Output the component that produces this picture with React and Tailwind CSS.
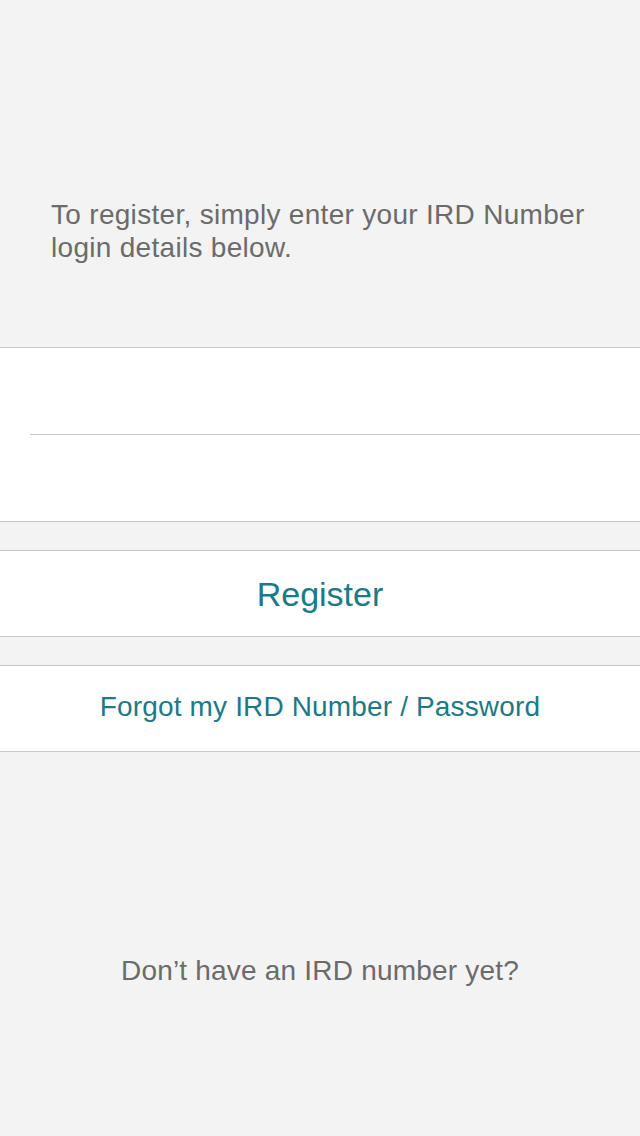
export default function App() {
  return (
    <div className="min-h-[1136px] w-full bg-[#f3f3f3] font-['Liberation_Sans',Arial,sans-serif]">
      <div className="pt-[198px] pb-[83px] pl-[51px] pr-[40px]">
        <p className="text-[28px] leading-[33px] tracking-[0.3px] text-[#6b6b6b]">
          To register, simply enter your IRD Number login details below.
        </p>
      </div>

      <div className="bg-white border-y border-[#c8c7cc]">
        <div className="h-[87px] border-b border-[#c8c7cc] ml-[30px]" />
        <div className="h-[86px]" />
      </div>

      <div className="h-[28px]" />
      <button className="w-full h-[87px] pt-[2px] bg-white border-y border-[#c8c7cc] text-[34px] text-[#1b7a86] flex items-center justify-center">
        Register
      </button>

      <div className="h-[28px]" />
      <button className="w-full h-[87px] pb-[3px] bg-white border-y border-[#c8c7cc] text-[28px] tracking-[0.15px] text-[#1b7a86] flex items-center justify-center">
        Forgot my IRD Number / Password
      </button>

      <div className="pt-[202px] text-center">
        <p className="text-[28px] leading-[33px] tracking-[0.2px] text-[#6b6b6b]">Don’t have an IRD number yet?</p>
      </div>
    </div>
  )
}
